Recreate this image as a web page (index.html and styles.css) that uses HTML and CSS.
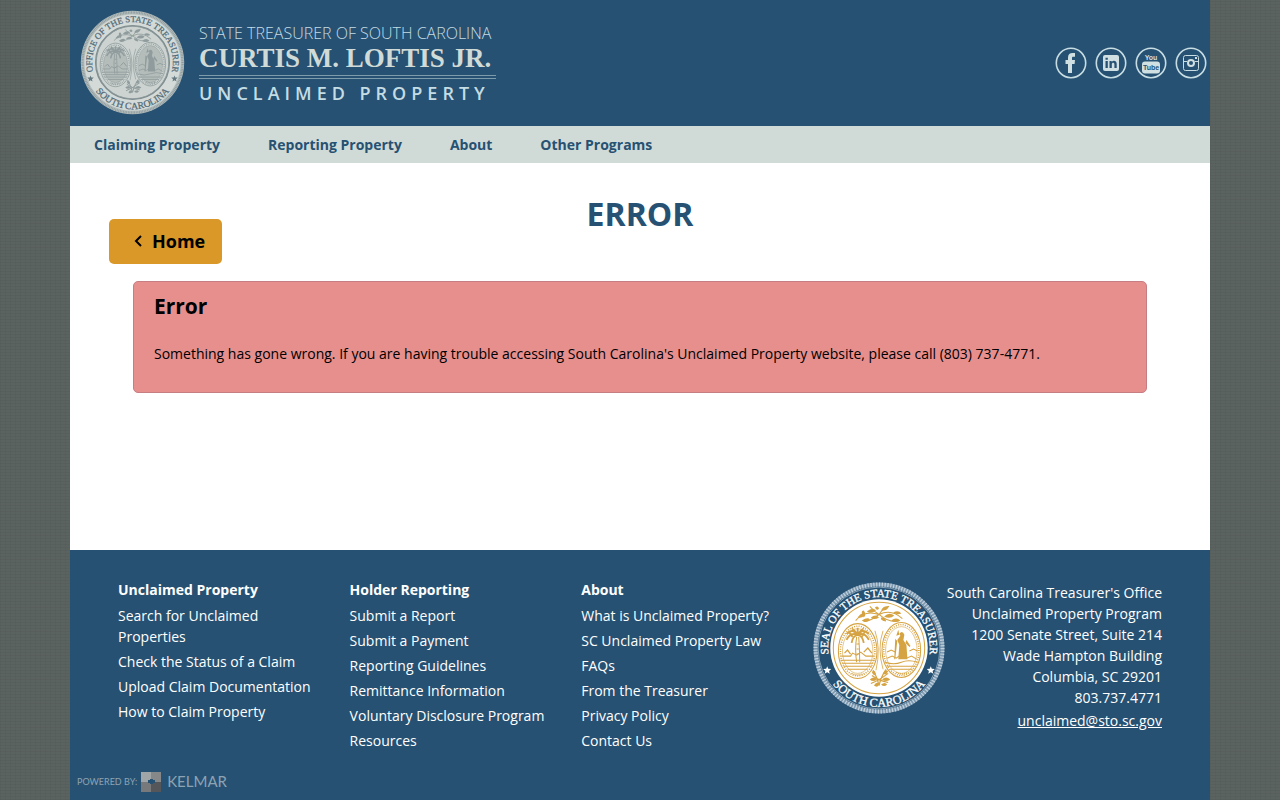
FILE: index.html
```html
<!DOCTYPE html>
<html lang="en">
<head>
<meta charset="utf-8">
<meta name="viewport" content="width=device-width, initial-scale=1">
<title>Error - Unclaimed Property</title>
<link rel="stylesheet" href="styles.css">
</head>
<body>
<svg class="defs" aria-hidden="true">
  <defs>
    <path id="arc-top" d="M15.8 73.7A50 50 0 1 1 114.2 73.7"/>
    <path id="arc-bottom" d="M14.8 94A58 58 0 0 0 115.2 94"/>
    <symbol id="seal-art" viewBox="0 0 130 130">
      <g fill="none" stroke="currentColor" stroke-width="1">
        <circle cx="65" cy="65" r="45"/>
        <ellipse cx="44" cy="68" rx="19" ry="27"/>
        <ellipse cx="44" cy="68" rx="15" ry="22" stroke-width=".6"/>
        <ellipse cx="87" cy="67" rx="19" ry="27"/>
        <ellipse cx="87" cy="67" rx="15.500" ry="23" stroke-width=".6"/>
        <ellipse cx="44" cy="68" rx="17" ry="24.500" stroke-width="1.500" stroke-dasharray="1 1.300"/>
        <ellipse cx="87" cy="67" rx="17.300" ry="25" stroke-width="1.500" stroke-dasharray="1 1.300"/>
        <path d="M43 54q-2 12 0 25M45 54q1 12 1 25M43 61h2M43 66h2M43 71h2" stroke-width="1"/>
        <path d="M44 52q-5-7-11-1M44 52q-7-3-11 5M44 52q-5 1-6 8M44 52q5-7 11-1M44 52q7-3 11 5M44 52q5 1 6 8M44 52q-4-6-6-6M44 52q4-6 6-6M44 52v-7M36 50l3 4M51 49l-3 5" stroke-width="1.800"/>
        <path d="M28 73h9l2-3 4 2 4-3 5 4h8M27 77h34M29 80h30M30 83h28M34 86h20" stroke-width="1"/>
        <path d="M31 70l3-3 3 4M50 69l4-4 4 5" stroke-width="1.200"/>
        <path d="M73 75l5-2 4 2 4-3 6 3 5-2 5 3M71 79q9 3 16 0t16 0M73 83h28M76 86h22" stroke-width="1"/>
        <path d="M73 69l4-2 4 2M95 68l4-2 4 2" stroke-width="1"/>
        <path d="M38 90q6 3 12 0M82 89q6 3 12 0" stroke-width="1.500" stroke-dasharray="1 1"/>
        <path d="M42 38q9-11 23-6 12-6 23 4M65 32q-9 7-15 7M65 32q8 7 16 7M56 24q4 5 9 8 5-7 10-8" stroke-width="1"/>
        <path d="M65 102q-2-9-6-15M65 102q2-9 7-16M57 100q8-3 17-10M74 99q-9-2-16-7" stroke-width="1.200"/>
        <path d="M61 48q6 17 1 39M69 48q-6 17 0 38" stroke-width=".8"/>
      </g>
      <g fill="currentColor">
        <path d="M85 51q3-4 5 1l-1 5 3 5 1 14h-9l1-14-2-5 3-4zM81 56l-1 20h1l2-18zM92 57l4 6-1 1-4-4zM82 53l2-6 1 5z"/>
        <path d="M44 35q4-6 7-3-2 4-7 3M48 38q6-4 8-1-4 4-8 1M53 29q6-5 9-1-5 4-9 1M57 35q5-4 8 0-5 3-8 0M67 28q2-5 8-4-2 5-8 4M70 34q5-5 10-1-4 4-10 1M79 30q5-3 8 1-4 2-8-1M77 38q5-4 9 0-4 3-9 0M61 25q3-2 4 1-2 3-4-1M50 35q-4-7 0-7 3 4 0 7M72 39q-6-1-5-4 5 0 5 4"/>
        <path d="M58 89q2-4 4 1-2 4-4-1M69 90q2-5 5-2-2 5-5 2M56 96q4-4 7 0-4 3-7 0M68 96q4-4 8 0-4 3-8 0M60 102q2-4 5-2-1 5-5 2M67 101q4-3 6 0-3 3-6 0"/>
      </g>
    </symbol>
  </defs>
</svg>

<div class="page">
  <header class="header">
    <a class="brand" href="#">
      <svg class="brand-seal" viewBox="0 0 130 130" role="img" aria-label="Office of the State Treasurer, South Carolina">
        <circle cx="65" cy="65" r="64" fill="#b5bfbe"/>
        <circle cx="65" cy="65" r="62" fill="none" stroke="#8e9a9d" stroke-width="3" stroke-dasharray="1 1"/>
        <circle cx="65" cy="65" r="59.500" fill="#d3dad7"/>
        <circle cx="65" cy="65" r="45.500" fill="#ccd3d0" stroke="#7c8a8e" stroke-width="2"/>
        <ellipse cx="44" cy="68" rx="15" ry="22" fill="#b5bdbb"/>
        <ellipse cx="87" cy="67" rx="15" ry="23" fill="#b5bdbb"/>
        <use href="#seal-art" width="130" height="130" color="#8f9b9c"/>
        <g class="seal-text brand-seal-text">
          <text><textPath href="#arc-top" startOffset="50%">OFFICE OF THE STATE TREASURER</textPath></text>
          <text class="seal-state"><textPath href="#arc-bottom" startOffset="50%">SOUTH CAROLINA</textPath></text>
        </g>
        <path fill="#667982" d="M13 81l1 2.500 3 .2-2.200 2 .7 2.700-2.500-1.500-2.500 1.500.7-2.700-2.200-2 3-.2zM117 81l1 2.500 3 .2-2.200 2 .7 2.700-2.500-1.500-2.500 1.500.7-2.700-2.200-2 3-.2z"/>
      </svg>
      <span class="wordmark">
        <span class="wordmark-office">STATE TREASURER OF SOUTH CAROLINA</span>
        <span class="wordmark-name">CURTIS M. LOFTIS JR.</span>
        <span class="wordmark-program">UNCLAIMED PROPERTY</span>
      </span>
    </a>
    <div class="social">
      <a href="#" aria-label="Facebook"><svg viewBox="0 0 32 32"><circle class="ring" cx="16" cy="16" r="14.700"/><path class="solid" d="M13 26V17h-2.500v-4H13v-2.500C13 7.300 14.800 6 17.500 6H20v3.700h-1.700c-1 0-1.300.5-1.300 1.300v2h3l-.4 4H17v9z"/></svg></a>
      <a href="#" aria-label="LinkedIn"><svg viewBox="0 0 32 32"><circle class="ring" cx="16" cy="16" r="14.700"/><rect class="solid" x="8" y="8" width="16" height="16" rx="2"/><path class="cut" d="M10.500 14h2.300v7h-2.300zM10.500 10.700h2.300v2h-2.300zM14.500 14h2.200v1c1.400-1.900 5-1.500 5 1.800V21h-2.300v-3.700c0-2-2.600-2-2.600 0V21h-2.300z"/></svg></a>
      <a href="#" aria-label="YouTube"><svg viewBox="0 0 32 32"><circle class="ring" cx="16" cy="16" r="14.700"/><rect class="solid" x="7" y="14.500" width="18" height="12" rx="3"/><text class="yt yt-you" x="16" y="12.500">You</text><text class="yt yt-tube" x="16" y="23">Tube</text></svg></a>
      <a href="#" aria-label="Instagram"><svg viewBox="0 0 32 32"><circle class="ring" cx="16" cy="16" r="14.700"/><rect class="line" x="8.500" y="8.500" width="15" height="15" rx="2"/><path class="line" d="M8.500 14.500H12M20 14.500h3.500"/><circle cx="16" cy="16" r="3" class="dot"/><path class="solid" d="M20 10h2v2h-2z"/></svg></a>
    </div>
  </header>

  <nav class="nav" aria-label="Main">
    <a href="#">Claiming Property</a>
    <a href="#">Reporting Property</a>
    <a href="#">About</a>
    <a href="#">Other Programs</a>
  </nav>

  <main class="main">
    <div class="title-row">
      <h1>ERROR</h1>
      <button class="home" type="button"><svg viewBox="0 0 8 12" aria-hidden="true"><path d="M7 0L2 5l5 5"/></svg>Home</button>
    </div>
    <section class="alert" role="alert">
      <h2>Error</h2>
      <p>Something has gone wrong. If you are having trouble accessing South Carolina's Unclaimed Property website, please call (803) 737-4771.</p>
    </section>
  </main>

  <footer class="footer">
    <div class="footer-grid">
      <section class="links">
        <h3>Unclaimed Property</h3>
        <ul>
          <li><a href="#">Search for Unclaimed Properties</a></li>
          <li><a href="#">Check the Status of a Claim</a></li>
          <li><a href="#">Upload Claim Documentation</a></li>
          <li><a href="#">How to Claim Property</a></li>
        </ul>
      </section>
      <section class="links">
        <h3>Holder Reporting</h3>
        <ul>
          <li><a href="#">Submit a Report</a></li>
          <li><a href="#">Submit a Payment</a></li>
          <li><a href="#">Reporting Guidelines</a></li>
          <li><a href="#">Remittance Information</a></li>
          <li><a href="#">Voluntary Disclosure Program</a></li>
          <li><a href="#">Resources</a></li>
        </ul>
      </section>
      <section class="links">
        <h3>About</h3>
        <ul>
          <li><a href="#">What is Unclaimed Property?</a></li>
          <li><a href="#">SC Unclaimed Property Law</a></li>
          <li><a href="#">FAQs</a></li>
          <li><a href="#">From the Treasurer</a></li>
          <li><a href="#">Privacy Policy</a></li>
          <li><a href="#">Contact Us</a></li>
        </ul>
      </section>
      <section class="contact">
        <svg class="footer-seal" viewBox="0 0 130 130" role="img" aria-label="Seal of the State Treasurer, South Carolina">
          <circle cx="65" cy="65" r="62.500" fill="none" stroke="#7d9ab2" stroke-width="4"/>
          <circle cx="65" cy="65" r="62.500" fill="none" stroke="#c3d1dc" stroke-width="4" stroke-dasharray="1.200 1.600"/>
          <circle cx="65" cy="65" r="60" fill="none" stroke="#9db3c5" stroke-width=".8"/>
          <circle cx="65" cy="65" r="48" fill="#fff"/>
          <use href="#seal-art" width="130" height="130" color="#d6a342"/>
          <g class="seal-text footer-seal-text">
            <text><textPath href="#arc-top" startOffset="50%">SEAL OF THE STATE TREASURER</textPath></text>
            <text class="seal-state"><textPath href="#arc-bottom" startOffset="50%">SOUTH CAROLINA</textPath></text>
          </g>
          <path fill="#fff" d="M14 83l1 2.500 3 .2-2.200 2 .7 2.700-2.500-1.500-2.500 1.500.7-2.700-2.200-2 3-.2zM116 83l1 2.500 3 .2-2.200 2 .7 2.700-2.500-1.500-2.500 1.500.7-2.700-2.200-2 3-.2z"/>
        </svg>
        <address>
          South Carolina Treasurer's Office<br>
          Unclaimed Property Program<br>
          1200 Senate Street, Suite 214<br>
          Wade Hampton Building<br>
          Columbia, SC 29201<br>
          803.737.4771
          <a href="mailto:unclaimed@sto.sc.gov">unclaimed@sto.sc.gov</a>
        </address>
      </section>
    </div>
    <a class="powered" href="#">
      <span class="powered-by">POWERED BY:</span>
      <svg viewBox="0 0 20 20" aria-hidden="true"><path fill="#a0a5a8" d="M0 0h10v10H0z"/><path fill="#858789" d="M10 0h10v10H10z"/><path fill="#77797b" d="M0 10h10v10H0z"/><path fill="#555659" d="M10 10h10v10H10z"/><path fill="#265172" d="M7 8h2V7h3v1h2v3h-2v1H9v-1H7z"/></svg>
      <span class="powered-name">KELMAR</span>
    </a>
  </footer>
</div>
</body>
</html>
```
FILE: styles.css
```css
* { box-sizing: border-box; }

body {
  margin: 0;
  font: 14px/21px "Open Sans", sans-serif;
  color: #000;
  background-color: #5b6360;
  background-image:
    repeating-linear-gradient(0deg, rgba(0, 0, 0, .04) 0 1px, transparent 1px 3px),
    repeating-linear-gradient(90deg, rgba(0, 0, 0, .03) 0 1px, transparent 1px 5px);
}

.defs { position: absolute; width: 0; height: 0; }

a { color: inherit; text-decoration: none; }

.page {
  display: flex;
  flex-direction: column;
  max-width: 1140px;
  min-height: 100vh;
  margin: 0 auto;
  background: #fff;
}

.header {
  display: flex;
  align-items: center;
  justify-content: space-between;
  padding: 10px 3px 11px 10px;
  background: #265172;
}

.brand { display: flex; align-items: center; gap: 14px; }
.brand-seal { width: 105px; height: 105px; }

.seal-text {
  font-family: "Liberation Serif", serif;
  text-anchor: middle;
}
.brand-seal-text { font-size: 11px; fill: #526a78; stroke: #526a78; stroke-width: .3; }
.footer-seal-text { font-size: 11px; fill: #fff; stroke: #fff; stroke-width: .3; }
.seal-state { font-size: 12px; }

.wordmark {
  display: flex;
  flex-direction: column;
  color: #d0dfe1;
  white-space: nowrap;
}
.wordmark-office { font-size: 16px; font-weight: 300; line-height: 22px; color: #c4dce4; }
.wordmark-name {
  font: 700 27px/28px "Liberation Serif", serif;
  color: #d0dad7;
  padding-bottom: 3px;
}
.wordmark-program {
  padding-top: 4px;
  border-top: 4px double #7e9bab;
  font-size: 18px;
  font-weight: 600;
  line-height: 20px;
  letter-spacing: 5px;
  margin-right: -5px;
  color: #c4dce4;
}

.social { display: flex; gap: 8px; }
.social svg { display: block; width: 32px; height: 32px; }
.ring, .line { fill: none; stroke: #c8dde3; stroke-width: 1.6; }
.line { stroke-width: 1; }
.solid { fill: #d0dfe1; }
.cut { fill: #265172; }
.dot { fill: #265172; stroke: #d0dfe1; stroke-width: 2; }
.yt {
  font-family: "Liberation Sans Narrow", "Liberation Sans", sans-serif;
  font-size: 7px;
  font-weight: 700;
  text-anchor: middle;
}
.yt-you { fill: #d0dfe1; }
.yt-tube { fill: #265172; }

.nav {
  display: flex;
  flex-wrap: wrap;
  gap: 0 48px;
  padding: 8px 24px;
  background: #d0dad7;
  color: #265172;
  font-weight: 700;
}

.main { flex: 1; padding: 29px 39px; }
.title-row { display: grid; }
.title-row > * { grid-area: 1 / 1; }

h1 {
  margin: 0;
  padding-bottom: 28px;
  color: #265172;
  font-size: 32px;
  line-height: 44px;
  text-align: center;
}

.home {
  display: flex;
  align-items: center;
  align-self: end;
  justify-self: start;
  gap: 10px;
  padding: 10px 17px 10px 25px;
  border: 0;
  border-radius: 5px;
  background: #d99828;
  color: #000;
  font: 700 18px/25px "Open Sans", sans-serif;
}
.home svg {
  width: 8px;
  height: 12px;
  overflow: visible;
  fill: none;
  stroke: #000;
  stroke-width: 2;
}

.alert {
  margin: 17px 24px 0;
  padding: 9px 20px 28px;
  border: 1px solid #c77d84;
  border-radius: 5px;
  background: #e68f8d;
}
.alert h2 { margin: 0 0 22px; font-size: 21px; line-height: 30px; }
.alert p { margin: 0; }

.footer { background: #265172; color: #fff; }
.footer-grid {
  display: grid;
  grid-template-columns: 2fr 2fr 2fr 3fr;
  padding: 29px 48px 18px;
}
.links h3 { margin: 0 0 5px; font-size: 14px; line-height: 21px; }
.links ul {
  display: grid;
  gap: 4px;
  margin: 0;
  padding: 0 24px 0 0;
  list-style: none;
}
.contact { display: flex; justify-content: flex-end; align-items: flex-start; gap: 2px; padding-top: 3px; }
.footer-seal { width: 132px; height: 132px; flex: none; }
address { font-style: normal; text-align: right; white-space: nowrap; }
address a { display: block; margin-top: 2px; text-decoration: underline; }

.powered {
  display: inline-flex;
  align-items: center;
  gap: 4px;
  padding: 0 7px 8px;
  color: #8da3b3;
  font-family: Lato, sans-serif;
}
.powered svg { width: 20px; height: 20px; }
.powered-by { font-size: 9px; }
.powered-name { padding-left: 2px; font-size: 15px; }
```
